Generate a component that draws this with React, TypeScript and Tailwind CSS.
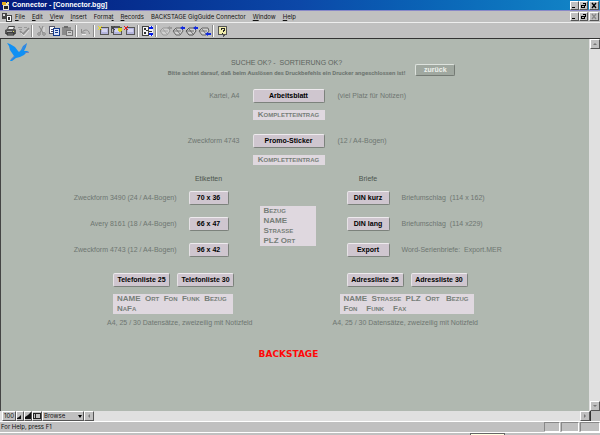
import React from 'react';

const menus = ['File', 'Edit', 'View', 'Insert', 'Format', 'Records', 'BACKSTAGE GigGuide Connector', 'Window', 'Help'];
const hotkeys = [0, 0, 0, 0, 5, 0, -1, 0, 0];

const Icon: React.FC<{ children: React.ReactNode; smooth?: boolean }> = ({ children, smooth }) => (
  <svg viewBox="0 0 13 12" className="w-[13px] h-3 shrink-0" fill="none" shapeRendering={smooth ? 'auto' : 'crispEdges'}>
    {children}
  </svg>
);

const Printer = () => (
  <Icon smooth>
    <path d="M4.500 1.500h6l-1 3h-6z" fill="#eee" stroke="#444" />
    <path d="M1 5l2-1h8l1 1v4H1z" fill="#555" />
    <path d="M3 8h7v2H3z" fill="#999" stroke="#222" />
    <path d="M3 6h5v1H3z" fill="#aaa" />
    <path d="M9 6h1v1H9z" fill="#e8e060" />
  </Icon>
);

const Spelling = () => (
  <Icon smooth>
    <path d="M1 2.500h4M2 4.500h3M7 2.500h3" stroke="#999" />
    <path d="M3 6l3 3 6-6" stroke="#8a8a8a" strokeWidth="1.6" />
    <path d="M4 8l3 3 5-6" stroke="#eee" strokeWidth=".7" />
  </Icon>
);

const Cut = () => (
  <Icon smooth>
    <path d="M4 1l4 7M8 1L5 8" stroke="#888" />
    <circle cx="4" cy="9" r="1.300" stroke="#888" />
    <circle cx="9" cy="9" r="1.300" stroke="#888" />
    <path d="M9 2v5" stroke="#e4e4e4" />
  </Icon>
);

const Copy = () => (
  <Icon>
    <path d="M1.500 1.500h5v7h-5z" fill="#fff" stroke="#556" />
    <path d="M3 4.500h2M3 6.500h2" stroke="#446" />
    <path d="M5.500 3.500h6v7h-6z" fill="#dde4f8" stroke="#123a8c" />
    <path d="M7 5.500h3M7 7.500h3" stroke="#123a8c" />
  </Icon>
);

const Paste = () => (
  <Icon>
    <path d="M1 2h9v8H1z" fill="#8a8a8a" />
    <path d="M3 1h4v2H3z" fill="#6a6a6a" />
    <path d="M5.500 5.500h6v5h-6z" fill="#ccc" stroke="#777" />
    <path d="M7 7.500h3" stroke="#777" />
  </Icon>
);

const Undo = () => (
  <Icon smooth>
    <path d="M2.500 4v4h4M3 7.500C5 4 10 4 10.500 9" stroke="#8b8b8b" />
    <path d="M3 9.500h4" stroke="#eee" />
  </Icon>
);

const Card: React.FC<{ spark: string; stacked?: boolean }> = ({ spark, stacked }) => (
  <Icon>
    {stacked && <path d="M1.500 1.500h8v6h-8z" fill="#bbb" stroke="#555" />}
    <path d="M3.500 2.500h8v7h-8z" fill="#b4b4dc" stroke="#555" />
    <path d="M5 4h5v3H5z" fill="#d4d4f0" />
    <path d="M1 1h1v1h2V1h1v1H4v2h1v1H4V4H2v1H1V4h1V2H1z" fill={spark} />
    {stacked && <path d="M8 3h4v2l-2 3-2-3z" fill="#dcd820" />}
  </Icon>
);

const Sort = () => (
  <Icon>
    <path d="M1 1h11v10H1z" fill="#f4f4f4" />
    <path d="M1.500 1.500h6v9h-6z" stroke="#444" />
    <path d="M3 3h2v2H3zM3 7h2v2H3zM5 5h2v1H5z" fill="#333" />
    <path d="M8 6.500h3" stroke="#333" />
    <path d="M8 2h2V1h1v1h1v2H8zM8 8h4v2h-1v1h-1v-1H8z" fill="#0018e8" />
  </Icon>
);

const Find: React.FC<{ tone: string; mark: string; low?: boolean }> = ({ tone, mark, low }) => (
  <Icon smooth>
    <path d="M1 6l3-3h6l1 3-3 4H4z" fill="#d0d0d0" stroke={tone} />
    <path d="M2 6h7M4 4l4 5" stroke={tone} strokeWidth=".8" />
    <path d={low ? 'M7 9l3-2v1h3v2h-3v1z' : 'M8 3l3-2v1h2v2h-2v1z'} fill={mark} />
  </Icon>
);

const HelpIcon = () => (
  <Icon>
    <path d="M2.500 1.500h8v8h-2l-1 2v-2h-5z" fill="#f0ecac" stroke="#555" />
    <path d="M5 4.500v-1h3v2h-1v1M6 8.500h1" stroke="#222" />
  </Icon>
);

const toolGroups: { label: string; icon: React.ReactNode }[][] = [
  [{ label: 'Print', icon: <Printer /> }, { label: 'Spelling', icon: <Spelling /> }],
  [{ label: 'Cut', icon: <Cut /> }, { label: 'Copy', icon: <Copy /> }, { label: 'Paste', icon: <Paste /> }],
  [{ label: 'Undo', icon: <Undo /> }],
  [
    { label: 'New record', icon: <Card spark="#f0e020" /> },
    { label: 'Duplicate record', icon: <Card spark="#444" stacked /> },
    { label: 'Delete record', icon: <Card spark="#f01818" /> },
  ],
  [{ label: 'Sort', icon: <Sort /> }],
  [
    { label: 'Modify find', icon: <Find tone="#999" mark="#999" /> },
    { label: 'Find', icon: <Find tone="#666" mark="#1028e0" /> },
    { label: 'Find again', icon: <Find tone="#555" mark="#1028e0" /> },
    { label: 'Find all', icon: <Find tone="#666" mark="#1028e0" low /> },
  ],
  [{ label: 'Help', icon: <HelpIcon /> }],
];

const bevel = 'bg-[#c0c0c0] border border-t-white border-l-white border-b-[#555] border-r-[#555]';

const WindowButtons: React.FC<{ dim?: boolean }> = ({ dim }) => (
  <div className="flex">
    <button aria-label="Minimize" className={`w-[9px] h-[9px] ${bevel}`}>
      <svg viewBox="0 0 7 7" className="w-full h-full"><path d="M1 5h3v1H1z" fill="#000" /></svg>
    </button>
    <button aria-label="Restore" className={`w-[9px] h-[9px] ${bevel}`}>
      <svg viewBox="0 0 7 7" className="w-full h-full" fill="none" stroke="#000" shapeRendering="crispEdges">
        <path d="M2.500 1.500h3v2M1.500 3.500h3v2h-3z" />
      </svg>
    </button>
    <button aria-label="Close" className={`w-[10px] h-[9px] ml-px ${bevel}`}>
      <svg viewBox="0 0 8 7" className="w-full h-full" fill="none" stroke={dim ? '#888' : '#000'} strokeWidth="1.3">
        <path d="M2 1l4 5M6 1L2 6" />
      </svg>
    </button>
  </div>
);

const ArrowButton: React.FC<{ label: string; d: string }> = ({ label, d }) => (
  <button aria-label={label} className={`w-[10px] h-[10px] shrink-0 ${bevel}`}>
    <svg viewBox="0 0 8 8" className="w-full h-full"><path d={d} fill="#777" /></svg>
  </button>
);

const PushButton: React.FC<{ children: React.ReactNode; className?: string }> = ({ children, className }) => (
  <button
    className={`h-[14px] rounded-[2px] bg-[#cfc6cf] border border-t-[#eeeaee] border-l-[#e6e2e6] border-b-[#7c827c] border-r-[#7c827c] text-[7px] leading-[12px] font-bold text-black text-center whitespace-nowrap ${className ?? ''}`}
  >
    {children}
  </button>
);

const FieldBox: React.FC<{ lines: string[]; className?: string }> = ({ lines, className }) => (
  <div className={`bg-[#dfd8df] text-[#767e78] text-[8px] leading-[10px] font-bold [font-variant-caps:small-caps] whitespace-pre ${className ?? ''}`}>
    {lines.map((line) => (
      <div key={line}>{line}</div>
    ))}
  </div>
);

const printRows = [
  { before: 'Kartei, A4', button: 'Arbeitsblatt', after: '(viel Platz für Notizen)' },
  { before: 'Zweckform 4743', button: 'Promo-Sticker', after: '(12 / A4-Bogen)' },
];

const labels = [
  { text: 'Zweckform 3490 (24 / A4-Bogen)', button: '70 x 36' },
  { text: 'Avery 8161 (18 / A4-Bogen)', button: '66 x 47' },
  { text: 'Zweckform 4743 (12 / A4-Bogen)', button: '96 x 42' },
];

const letters = [
  { text: 'Briefumschlag  (114 x 162)', button: 'DIN kurz' },
  { text: 'Briefumschlag  (114 x229)', button: 'DIN lang' },
  { text: 'Word-Serienbriefe:  Export.MER', button: 'Export' },
];

const Bird = () => (
  <svg viewBox="0 0 22 20" className="w-[22px] h-5 ml-[6px]">
    <path d="M0 1l3 1 5 3 3 4 1 1 2-2 2-4 4-3-1 4-2 4 1 0 2 0 2 1-3 1-2 2-4 2-4 1-4 3-2 0 1-2 3-3-2-3-2-3-1-4z" fill="#1090f4" />
    <path d="M4 18l4-4M19 2l-4 6M18 10.500h4" stroke="#7078c0" strokeWidth=".8" />
  </svg>
);

const Layout = () => (
  <main className="flex-1 min-w-0 overflow-hidden bg-[#b0b8b0] border-l border-l-[#444] text-[7px] leading-[10px] text-[#6e7670] whitespace-pre">
    <header className="grid grid-cols-[1fr_auto_1fr] pt-[3px] pr-[17px]">
      <Bird />
      <div className="mt-4 text-center">
        <h1 className="text-[#5c645e]">SUCHE OK? -  SORTIERUNG OK?</h1>
        <p className="text-[6px] font-bold font-['Roboto',sans-serif]">Bitte achtet darauf, daß beim Auslösen des Druckbefehls ein Drucker angeschlossen ist!</p>
      </div>
      <button className="self-end justify-self-start ml-[10px] mb-[2px] w-10 h-3 rounded-[2px] bg-[#a0a8a0] border border-t-[#dde2dd] border-l-[#dde2dd] border-b-[#747a74] border-r-[#747a74] text-[7px] leading-[10px] font-bold text-[#eef2ee]">
        zurück
      </button>
    </header>

    <section className="mt-[11px] pr-[13px] flex flex-col gap-[14px]">
      {printRows.map((row) => (
        <div key={row.button} className="grid grid-cols-[1fr_72px_1fr] gap-x-[13px] gap-y-[7px] items-center">
          <span className="text-right">{row.before}</span>
          <PushButton>{row.button}</PushButton>
          <span>{row.after}</span>
          <FieldBox className="col-start-2 text-center" lines={['Kompletteintrag']} />
        </div>
      ))}
    </section>

    <section className="mt-[9px] pr-[15px] grid grid-cols-[1fr_56px_1fr] gap-x-[31px]">
      <div className="grid grid-cols-[1fr_40px] gap-x-3 gap-y-3 items-center">
        <h2 className="col-start-2 -mb-[5px] text-center text-[#4c544e]">Etiketten</h2>
        {labels.map((item) => (
          <React.Fragment key={item.button}>
            <span className="col-start-1 text-right">{item.text}</span>
            <PushButton>{item.button}</PushButton>
          </React.Fragment>
        ))}
      </div>
      <FieldBox className="self-start mt-8 pl-1" lines={['Bezug', 'NAME', 'Strasse', 'PLZ Ort']} />
      <div className="grid grid-cols-[43px_1fr] gap-x-3 gap-y-3 items-center">
        <h2 className="-mb-[5px] text-center text-[#4c544e]">Briefe</h2>
        {letters.map((item) => (
          <React.Fragment key={item.button}>
            <PushButton className="col-start-1">{item.button}</PushButton>
            <span>{item.text}</span>
          </React.Fragment>
        ))}
      </div>
    </section>

    <section className="mt-4 pr-[5px] flex justify-center gap-20">
      <div>
        <div className="flex gap-[7px] pl-[6px]">
          <PushButton className="w-[57px]">Telefonliste 25</PushButton>
          <PushButton className="w-[57px]">Telefonliste 30</PushButton>
        </div>
        <FieldBox className="ml-[6px] mt-[7px] w-[120px] pl-1" lines={['NAME  Ort  Fon  Funk  Bezug', 'NaFa']} />
        <p className="mt-1">A4, 25 / 30 Datensätze, zweizeilig mit Notizfeld</p>
      </div>
      <div>
        <div className="flex gap-[7px] pl-[14px]">
          <PushButton className="w-[57px]">Adressliste 25</PushButton>
          <PushButton className="w-[57px]">Adressliste 30</PushButton>
        </div>
        <FieldBox className="ml-[7px] mt-[7px] w-[134px] pl-1" lines={['NAME  Strasse  PLZ  Ort   Bezug', 'Fon    Funk    Fax']} />
        <p className="mt-1">A4, 25 / 30 Datensätze, zweizeilig mit Notizfeld</p>
      </div>
    </section>

    <p className="mt-[21px] pr-[13px] text-center text-[9px] font-bold text-[#ff0808] font-['DejaVu_Sans',sans-serif]">BACKSTAGE</p>
  </main>
);

const App: React.FC = () => (
  <div className="h-screen flex flex-col overflow-hidden bg-[#c0c0c0] font-['Liberation_Sans',Arial,sans-serif]">
    <div className="h-[10px] shrink-0 flex items-center justify-between pl-[2px] pr-px bg-linear-to-r from-[#06187c] via-[#0c48a8] to-[#1488c8]">
      <div className="flex items-center gap-[2px]">
        <svg viewBox="0 0 8 9" className="w-2 h-[9px]">
          <path d="M1 2h4l2 2v5H1z" fill="#e8e4d0" />
          <path d="M0 1h4v3H0z" fill="#e8b020" />
          <path d="M2 5h4v3H2z" fill="#222" />
          <path d="M5 1h2v2H5z" fill="#f4e890" />
        </svg>
        <span className="text-[7px] leading-[10px] font-bold text-white">Connector - [Connector.bgg]</span>
      </div>
      <WindowButtons />
    </div>

    <div className="h-3 shrink-0 flex items-center justify-between pl-[2px] pr-px border-t border-t-[#8888c8]">
      <nav className="flex items-center gap-[7px] font-['Inter',sans-serif] text-[6px] leading-[10px] text-[#111]">
        <svg viewBox="0 0 10 10" className="w-[10px] h-[10px] -mr-1" shapeRendering="crispEdges">
          <path d="M0 1h5v6H0z" fill="#444" />
          <path d="M1 2h2v2H1z" fill="#ddd" />
          <path d="M4 3h5v6H4z" fill="#fff" stroke="#444" strokeWidth="1" />
          <path d="M6 5h2v3H6z" fill="#333" />
        </svg>
        {menus.map((name, i) => (
          <button key={name} className="whitespace-nowrap">
            {hotkeys[i] < 0 ? name : (
              <>
                {name.slice(0, hotkeys[i])}
                <u>{name[hotkeys[i]]}</u>
                {name.slice(hotkeys[i] + 1)}
              </>
            )}
          </button>
        ))}
      </nav>
      <WindowButtons dim />
    </div>

    <div className="h-[17px] shrink-0 flex items-center pl-1 border-t border-t-[#eee] border-b border-b-[#333]">
      {toolGroups.map((group, i) => (
        <div key={group[0].label} className="flex items-center">
          {i > 0 && <div className="w-[2px] h-3 ml-px mr-[2px] bg-[#8c8c8c] border-r border-r-white" />}
          {group.map((tool) => (
            <button key={tool.label} aria-label={tool.label}>{tool.icon}</button>
          ))}
        </div>
      ))}
    </div>

    <div className="flex-1 min-h-0 flex">
      <Layout />
      <div className="w-[11px] shrink-0 flex flex-col items-center justify-between bg-[#e0e0e0]">
        <ArrowButton label="Scroll up" d="M4 3l2 2H2z" />
        <ArrowButton label="Scroll down" d="M4 5l2-2H2z" />
      </div>
    </div>

    <div className="h-[10px] shrink-0 flex bg-[#e0e0e0] pl-[2px] text-[6px] leading-[8px] text-[#111] font-['Inter',sans-serif]">
      <button className={`w-[14px] ${bevel}`}>100</button>
      <button aria-label="Zoom out" className={`w-2 ${bevel}`}>
        <svg viewBox="0 0 6 8" className="w-full h-full"><path d="M0 7V6l2-1 2-2v4z" fill="#111" /></svg>
      </button>
      <button aria-label="Zoom in" className={`w-2 ${bevel}`}>
        <svg viewBox="0 0 6 8" className="w-full h-full"><path d="M0 7V5l3-2 3-3v7z" fill="#111" /></svg>
      </button>
      <button aria-label="Status area" className={`w-[10px] ${bevel}`}>
        <svg viewBox="0 0 8 8" className="w-full h-full" fill="none" stroke="#222" shapeRendering="crispEdges">
          <path d="M.5 1.500h7v5h-7zM2.500 2v4" />
        </svg>
      </button>
      <div className={`w-[42px] flex items-center ${bevel}`}>
        <select aria-label="Mode" className="appearance-none flex-1 min-w-0 pl-px bg-transparent leading-[8px]">
          <option>Browse</option>
        </select>
        <svg viewBox="0 0 6 8" className="w-[6px] h-2"><path d="M1 3h4L3 6z" fill="#000" /></svg>
      </div>
      <ArrowButton label="Scroll left" d="M3 4l2-2v4z" />
      <div className="flex-1" />
      <ArrowButton label="Scroll right" d="M5 4L3 2v4z" />
      <div className="w-[10px] bg-[#c0c0c0] border-l border-l-[#333]" />
    </div>

    <div className="h-[11px] shrink-0 flex items-center justify-between border-t border-t-white pl-px text-[6px] leading-[10px] text-[#111] font-['Inter',sans-serif]">
      <span>For Help, press F1</span>
      <div className="flex gap-px h-[10px]">
        <div className="w-4 border border-t-[#888] border-l-[#888] border-b-white border-r-white" />
        <div className="w-[18px] border border-t-[#888] border-l-[#888] border-b-white border-r-white" />
        <div className="w-5 border border-t-[#888] border-l-[#888] border-b-white border-r-white" />
      </div>
    </div>
    <div className="h-[3px] shrink-0 flex justify-end pr-[95px] border-t border-t-white">
      <div className="w-[35px] bg-[#ffffe0] border-x border-t border-[#666]" />
    </div>
  </div>
);

export default App;
